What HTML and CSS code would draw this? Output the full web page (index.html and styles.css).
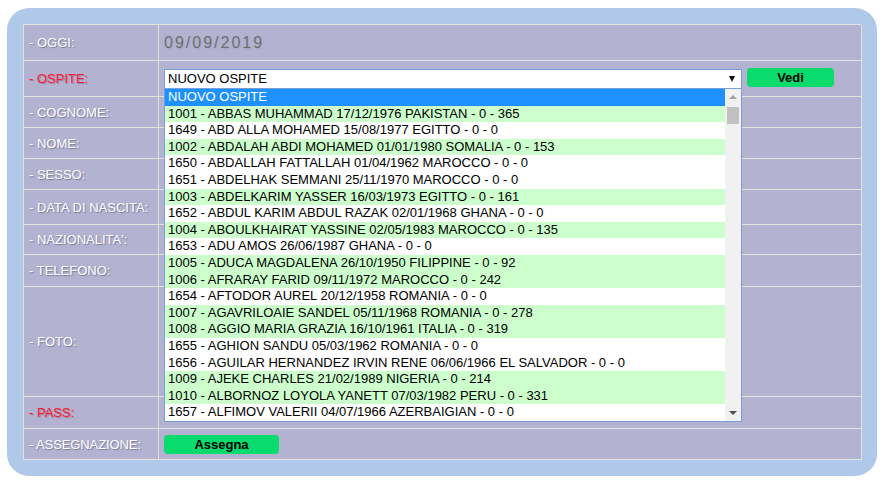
FILE: index.html
```html
<!DOCTYPE html>
<html lang="it">
<head>
<meta charset="utf-8">
<title>Ospiti</title>
<link rel="stylesheet" href="styles.css">
</head>
<body>
<div class="frame">
  <div class="form">
    <div class="lab">- OGGI:</div>
    <div class="val"><span class="date">09/09/2019</span></div>

    <div class="lab red">- OSPITE:</div>
    <div class="val ospite">
      <div class="selwrap">
        <div class="select">NUOVO OSPITE<span class="arrow"></span></div>
        <div class="list">
          <div class="items">
            <div class="opt sel">NUOVO OSPITE</div>
            <div class="opt g">1001 - ABBAS MUHAMMAD 17/12/1976 PAKISTAN - 0 - 365</div>
            <div class="opt">1649 - ABD ALLA MOHAMED 15/08/1977 EGITTO - 0 - 0</div>
            <div class="opt g">1002 - ABDALAH ABDI MOHAMED 01/01/1980 SOMALIA - 0 - 153</div>
            <div class="opt">1650 - ABDALLAH FATTALLAH 01/04/1962 MAROCCO - 0 - 0</div>
            <div class="opt">1651 - ABDELHAK SEMMANI 25/11/1970 MAROCCO - 0 - 0</div>
            <div class="opt g">1003 - ABDELKARIM YASSER 16/03/1973 EGITTO - 0 - 161</div>
            <div class="opt">1652 - ABDUL KARIM ABDUL RAZAK 02/01/1968 GHANA - 0 - 0</div>
            <div class="opt g">1004 - ABOULKHAIRAT YASSINE 02/05/1983 MAROCCO - 0 - 135</div>
            <div class="opt">1653 - ADU AMOS 26/06/1987 GHANA - 0 - 0</div>
            <div class="opt g">1005 - ADUCA MAGDALENA 26/10/1950 FILIPPINE - 0 - 92</div>
            <div class="opt g">1006 - AFRARAY FARID 09/11/1972 MAROCCO - 0 - 242</div>
            <div class="opt">1654 - AFTODOR AUREL 20/12/1958 ROMANIA - 0 - 0</div>
            <div class="opt g">1007 - AGAVRILOAIE SANDEL 05/11/1968 ROMANIA - 0 - 278</div>
            <div class="opt g">1008 - AGGIO MARIA GRAZIA 16/10/1961 ITALIA - 0 - 319</div>
            <div class="opt">1655 - AGHION SANDU 05/03/1962 ROMANIA - 0 - 0</div>
            <div class="opt">1656 - AGUILAR HERNANDEZ IRVIN RENE 06/06/1966 EL SALVADOR - 0 - 0</div>
            <div class="opt g">1009 - AJEKE CHARLES 21/02/1989 NIGERIA - 0 - 214</div>
            <div class="opt g">1010 - ALBORNOZ LOYOLA YANETT 07/03/1982 PERU - 0 - 331</div>
            <div class="opt">1657 - ALFIMOV VALERII 04/07/1966 AZERBAIGIAN - 0 - 0</div>
          </div>
          <div class="scroll">
            <span class="up"></span>
            <span class="thumb"></span>
            <span class="down"></span>
          </div>
        </div>
      </div>
      <button class="btn vedi">Vedi</button>
    </div>

    <div class="lab">- COGNOME:</div>
    <div class="val"></div>

    <div class="lab">- NOME:</div>
    <div class="val"></div>

    <div class="lab">- SESSO:</div>
    <div class="val"></div>

    <div class="lab">- DATA DI NASCITA:</div>
    <div class="val"></div>

    <div class="lab">- NAZIONALITA':</div>
    <div class="val"></div>

    <div class="lab">- TELEFONO:</div>
    <div class="val"></div>

    <div class="lab">- FOTO:</div>
    <div class="val"></div>

    <div class="lab red">- PASS:</div>
    <div class="val"></div>

    <div class="lab tight">- ASSEGNAZIONE:</div>
    <div class="val"><button class="btn assegna">Assegna</button></div>
  </div>
</div>
</body>
</html>
```

FILE: styles.css
```css
html, body {
  margin: 0;
  padding: 0;
  background: #ffffff;
}

body {
  font-family: "Liberation Sans", Arial, sans-serif;
}

.frame {
  box-sizing: border-box;
  width: 870px;
  height: 468px;
  margin: 8px 0 0 7px;
  padding: 16px;
  background: #b0c9ea;
  border-radius: 22px;
}

.form {
  display: grid;
  grid-template-columns: 135px 703px;
  grid-template-rows: 36px 36px 31px 31px 31px 35px 30px 32px 110px 32px 31px;
  border-top: 1px solid #e2e2da;
  border-left: 1px solid #e2e2da;
  background: #b3b3d1;
}

.lab, .val {
  box-sizing: border-box;
  border-right: 1px solid #e2e2da;
  border-bottom: 1px solid #e2e2da;
  display: flex;
  align-items: center;
}

.lab {
  padding-left: 5px;
  font-size: 13px;
  color: #ffffff;
  text-shadow: 1px 1px 1px rgba(85, 85, 120, 0.6);
  white-space: nowrap;
}

.lab.red {
  color: #ff1830;
  text-shadow: 1px 1px 1px rgba(120, 60, 90, 0.45);
}

.lab.tight {
  letter-spacing: -0.1px;
}

.val {
  padding-left: 5px;
}

.date {
  font-size: 16px;
  letter-spacing: 2px;
  color: #6f6f6f;
  text-shadow: 1px 1px 1px rgba(90, 90, 125, 0.12);
  margin-top: 1px;
}

.val.ospite {
  align-items: flex-start;
  padding-top: 7px;
  gap: 5px;
}

.selwrap {
  position: relative;
  width: 578px;
  margin-top: 1px;
}

.select {
  box-sizing: border-box;
  height: 20px;
  border: 1px solid #76a0dc;
  background: #ffffff;
  font-size: 13px;
  color: #000;
  padding-left: 3px;
  line-height: 18px;
  position: relative;
}

.arrow {
  position: absolute;
  right: 6px;
  top: 6px;
  width: 0;
  height: 0;
  border-left: 3.5px solid transparent;
  border-right: 3.5px solid transparent;
  border-top: 6px solid #111;
}

.list {
  position: absolute;
  left: 0;
  top: 20px;
  box-sizing: border-box;
  width: 578px;
  border: 1px solid #76a0dc;
  border-top: 0;
  background: #ffffff;
  display: flex;
  z-index: 5;
}

.items {
  flex: 1;
}

.opt {
  height: 16.6px;
  line-height: 16.6px;
  font-size: 13px;
  color: #000;
  padding-left: 3px;
  white-space: nowrap;
  background: #ffffff;
}

.opt.g {
  background: #ccffcc;
}

.opt.sel {
  background: #1e90ff;
  color: #ffffff;
}

.scroll {
  width: 16px;
  background: #f1f1f1;
  position: relative;
}

.up, .down {
  position: absolute;
  left: 4px;
  width: 0;
  height: 0;
  border-left: 4px solid transparent;
  border-right: 4px solid transparent;
}

.up {
  top: 6px;
  border-bottom: 4px solid #a3a3a3;
}

.down {
  bottom: 6px;
  border-top: 4px solid #505050;
}

.thumb {
  position: absolute;
  left: 2px;
  top: 18px;
  width: 12px;
  height: 17px;
  background: #c1c1c1;
}

.btn {
  border: 0;
  border-radius: 4px;
  background: #09db6d;
  color: #000;
  font-family: "Liberation Sans", Arial, sans-serif;
  font-weight: bold;
  font-size: 13px;
  padding: 0;
  height: 19px;
  line-height: 19px;
}

.vedi {
  width: 87px;
}

.assegna {
  width: 115px;
  margin-top: 1px;
}
```
